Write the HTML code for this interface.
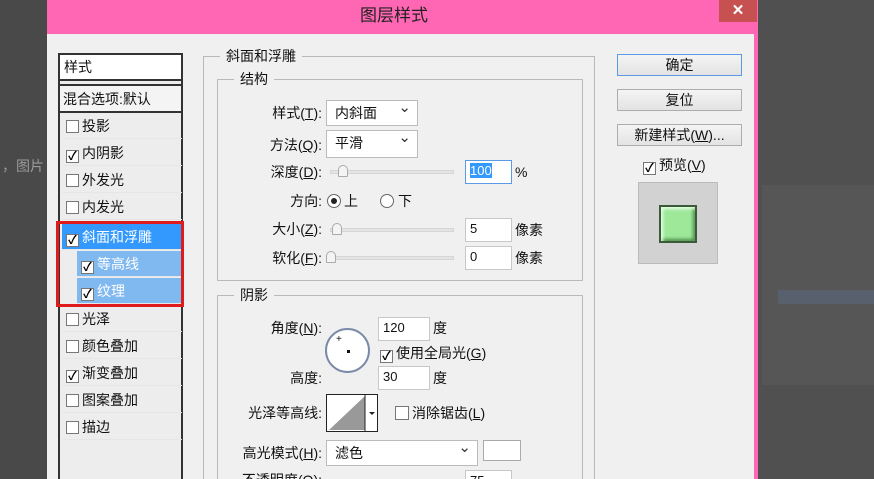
<!DOCTYPE html>
<html><head><meta charset="utf-8"><style>
*{margin:0;padding:0;box-sizing:border-box}
html,body{width:874px;height:479px;overflow:hidden}
body{background:#4a4a4a;font-family:"Liberation Sans","Noto Sans CJK SC",sans-serif;font-size:14px;color:#111}
#w{position:relative;width:874px;height:479px;overflow:hidden}
.a{position:absolute}
.lab{position:absolute;white-space:nowrap;line-height:16px}
.r{text-align:right}
.inp{position:absolute;background:#fff;border:1px solid #c8c8c8;padding-left:4px;font-size:13px;line-height:20px}
.dd{position:absolute;background:#fff;border:1px solid #bbb;padding-left:8px;line-height:24px}
.dd:after{content:"⌄";position:absolute;right:6px;top:-5px;font-size:15px;color:#333}
.track{position:absolute;height:4px;background:#e4e4e4;border:1px solid #d6d6d6}
.thumb{position:absolute;width:10px;height:12px;border:1px solid #aaa;border-radius:5px 5px 1px 1px;background:#f4f4f4}
.grp{position:absolute;border:1px solid #b9b9b9}
.gl{position:absolute;background:#f0f0f0;padding:0 6px;line-height:16px}
.it{position:absolute;left:62px;width:120px;height:26px;line-height:26px;padding-left:4px;border-bottom:1px solid #e6e6e6}
.cb{display:inline-block;width:13px;height:13px;border:1px solid #777;background:#fff;vertical-align:-2px;margin-right:3px;position:relative;font-size:12px;line-height:11px;text-align:center;font-weight:bold;color:#000}
.btn{position:absolute;left:617px;width:125px;height:22px;border:1px solid #adadad;background:linear-gradient(#f4f4f4,#e3e3e3);text-align:center;line-height:20px}
</style></head><body><div id="w">
<div class="a" style="left:0;top:0;width:47px;height:479px;background:#494949"></div>
<div class="lab" style="left:2px;top:158px;color:#9a9a9a">，图片</div>
<div class="a" style="left:758px;top:0;width:116px;height:479px;background:#505050"></div>
<div class="a" style="left:762px;top:185px;width:112px;height:200px;background:#565656"></div>
<div class="a" style="left:778px;top:290px;width:96px;height:14px;background:#57606c"></div>
<div class="a" style="left:47px;top:0;width:711px;height:479px;background:#f0f0f0"></div>
<div class="a" style="left:47px;top:0;width:711px;height:34px;background:#ff66b3"></div>
<div class="a" style="left:754px;top:0;width:4px;height:479px;background:#ff66b3"></div>
<div class="lab" style="left:360px;top:6px;font-size:17px;line-height:20px;color:#222">图层样式</div>
<div class="a" style="left:719px;top:0;width:38px;height:22px;background:#c75050;color:#fff;text-align:center;font-size:15px;line-height:21px;font-weight:bold">✕</div>

<div class="a" style="left:58px;top:53px;width:125px;height:426px;border:2px solid #333;border-bottom:none;background:#ededed"></div>
<div class="a" style="left:60px;top:55px;width:121px;height:26px;background:#fff;border-bottom:2px solid #333;padding-left:4px;line-height:24px">样式</div>
<div class="a" style="left:60px;top:84px;width:121px;height:29px;border-top:2px solid #333;border-bottom:2px solid #333;padding-left:3px;line-height:26px;background:#f4f4f4">混合选项:默认</div>
<div class="it" style="top:113px"><span class="cb"></span>投影</div>
<div class="it" style="top:140px"><span class="cb">✓</span>内阴影</div>
<div class="it" style="top:167px"><span class="cb"></span>外发光</div>
<div class="it" style="top:194px"><span class="cb"></span>内发光</div>
<div class="it" style="top:224px;background:#3399ff;color:#fff;height:26px"><span class="cb">✓</span>斜面和浮雕</div>
<div class="it" style="top:251px;left:77px;width:105px;background:#80b8f0;color:#fff"><span class="cb">✓</span>等高线</div>
<div class="it" style="top:278px;left:77px;width:105px;background:#80b8f0;color:#fff"><span class="cb">✓</span>纹理</div>
<div class="a" style="left:56px;top:221px;width:128px;height:86px;border:3px solid #e01b1b"></div>
<div class="it" style="top:306px"><span class="cb"></span>光泽</div>
<div class="it" style="top:333px"><span class="cb"></span>颜色叠加</div>
<div class="it" style="top:360px"><span class="cb">✓</span>渐变叠加</div>
<div class="it" style="top:387px"><span class="cb"></span>图案叠加</div>
<div class="it" style="top:414px"><span class="cb"></span>描边</div>

<div class="grp" style="left:203px;top:56px;width:392px;height:430px"></div>
<div class="gl" style="left:220px;top:48px">斜面和浮雕</div>
<div class="grp" style="left:217px;top:79px;width:366px;height:202px"></div>
<div class="gl" style="left:234px;top:71px">结构</div>
<div class="grp" style="left:217px;top:295px;width:366px;height:200px"></div>
<div class="gl" style="left:234px;top:287px">阴影</div>

<div class="lab r" style="left:220px;width:102px;top:105px">样式(<u>T</u>):</div>
<div class="dd" style="left:326px;top:100px;width:92px;height:26px">内斜面</div>
<div class="lab r" style="left:220px;width:102px;top:137px">方法(<u>Q</u>):</div>
<div class="dd" style="left:326px;top:130px;width:92px;height:28px">平滑</div>
<div class="lab r" style="left:220px;width:102px;top:164px">深度(<u>D</u>):</div>
<div class="track" style="left:330px;top:170px;width:124px"></div>
<div class="thumb" style="left:338px;top:165px"></div>
<div class="inp" style="left:465px;top:160px;width:47px;height:24px;border-color:#5b9be6"><span style="background:#3399ff;color:#fff">100</span></div>
<div class="lab" style="left:515px;top:164px">%</div>
<div class="lab r" style="left:220px;width:102px;top:193px">方向:</div>
<div class="a" style="left:327px;top:194px;width:14px;height:14px;border:1px solid #666;border-radius:50%;background:#fff"><div class="a" style="left:3px;top:3px;width:6px;height:6px;border-radius:50%;background:#222"></div></div>
<div class="lab" style="left:344px;top:193px">上</div>
<div class="a" style="left:380px;top:194px;width:14px;height:14px;border:1px solid #666;border-radius:50%;background:#fff"></div>
<div class="lab" style="left:398px;top:193px">下</div>
<div class="lab r" style="left:220px;width:102px;top:221px">大小(<u>Z</u>):</div>
<div class="track" style="left:330px;top:228px;width:124px"></div>
<div class="thumb" style="left:332px;top:223px"></div>
<div class="inp" style="left:465px;top:218px;width:47px;height:24px">5</div>
<div class="lab" style="left:515px;top:222px">像素</div>
<div class="lab r" style="left:220px;width:102px;top:250px">软化(<u>F</u>):</div>
<div class="track" style="left:328px;top:256px;width:126px"></div>
<div class="thumb" style="left:326px;top:251px"></div>
<div class="inp" style="left:465px;top:246px;width:47px;height:24px">0</div>
<div class="lab" style="left:515px;top:250px">像素</div>

<div class="lab r" style="left:220px;width:102px;top:320px">角度(<u>N</u>):</div>
<div class="a" style="left:325px;top:328px;width:45px;height:45px;border:2px solid #7a8aa8;border-radius:50%;background:#fff"><div class="a" style="left:20px;top:20px;width:3px;height:3px;background:#111"></div><div class="lab" style="left:9px;top:2px;font-size:10px">+</div></div>
<div class="inp" style="left:378px;top:317px;width:52px;height:24px">120</div>
<div class="lab" style="left:433px;top:320px">度</div>
<div class="lab" style="left:380px;top:345px"><span class="cb">✓</span>使用全局光(<u>G</u>)</div>
<div class="lab r" style="left:220px;width:102px;top:370px">高度:</div>
<div class="inp" style="left:378px;top:366px;width:52px;height:24px">30</div>
<div class="lab" style="left:433px;top:370px">度</div>
<div class="lab r" style="left:220px;width:102px;top:405px">光泽等高线:</div>
<div class="a" style="left:326px;top:394px;width:52px;height:38px;border:1px solid #222;background:#fff;overflow:hidden">
<svg width="50" height="36" style="position:absolute;left:0;top:0"><polygon points="2,35 38,1 38,35" fill="#999"/><line x1="38" y1="0" x2="38" y2="36" stroke="#222"/><polygon points="42,17 48,17 45,20" fill="#222"/></svg></div>
<div class="lab" style="left:395px;top:405px"><span class="cb" style="width:14px;height:14px"></span>消除锯齿(<u>L</u>)</div>
<div class="lab r" style="left:210px;width:112px;top:445px">高光模式(<u>H</u>):</div>
<div class="dd" style="left:326px;top:440px;width:152px;height:26px">滤色</div>
<div class="a" style="left:483px;top:440px;width:38px;height:21px;border:1px solid #aaa;background:#fff"></div>
<div class="lab r" style="left:210px;width:112px;top:472px">不透明度(<u>O</u>):</div>
<div class="inp" style="left:465px;top:470px;width:47px;height:24px">75</div>

<div class="btn" style="top:54px;border-color:#5b9be6">确定</div>
<div class="btn" style="top:89px">复位</div>
<div class="btn" style="top:124px">新建样式(<u>W</u>)...</div>
<div class="lab" style="left:643px;top:157px"><span class="cb">✓</span>预览(<u>V</u>)</div>
<div class="a" style="left:638px;top:182px;width:80px;height:82px;background:#d2d2d2;border:1px solid #bbb"></div>
<div class="a" style="left:659px;top:205px;width:38px;height:38px;background:#9ee89a;border:2px solid #3a5a3a;box-shadow:inset 2px 2px 3px #e8ffe6,inset -2px -2px 3px #4a8a48"></div>
</div></body></html>
